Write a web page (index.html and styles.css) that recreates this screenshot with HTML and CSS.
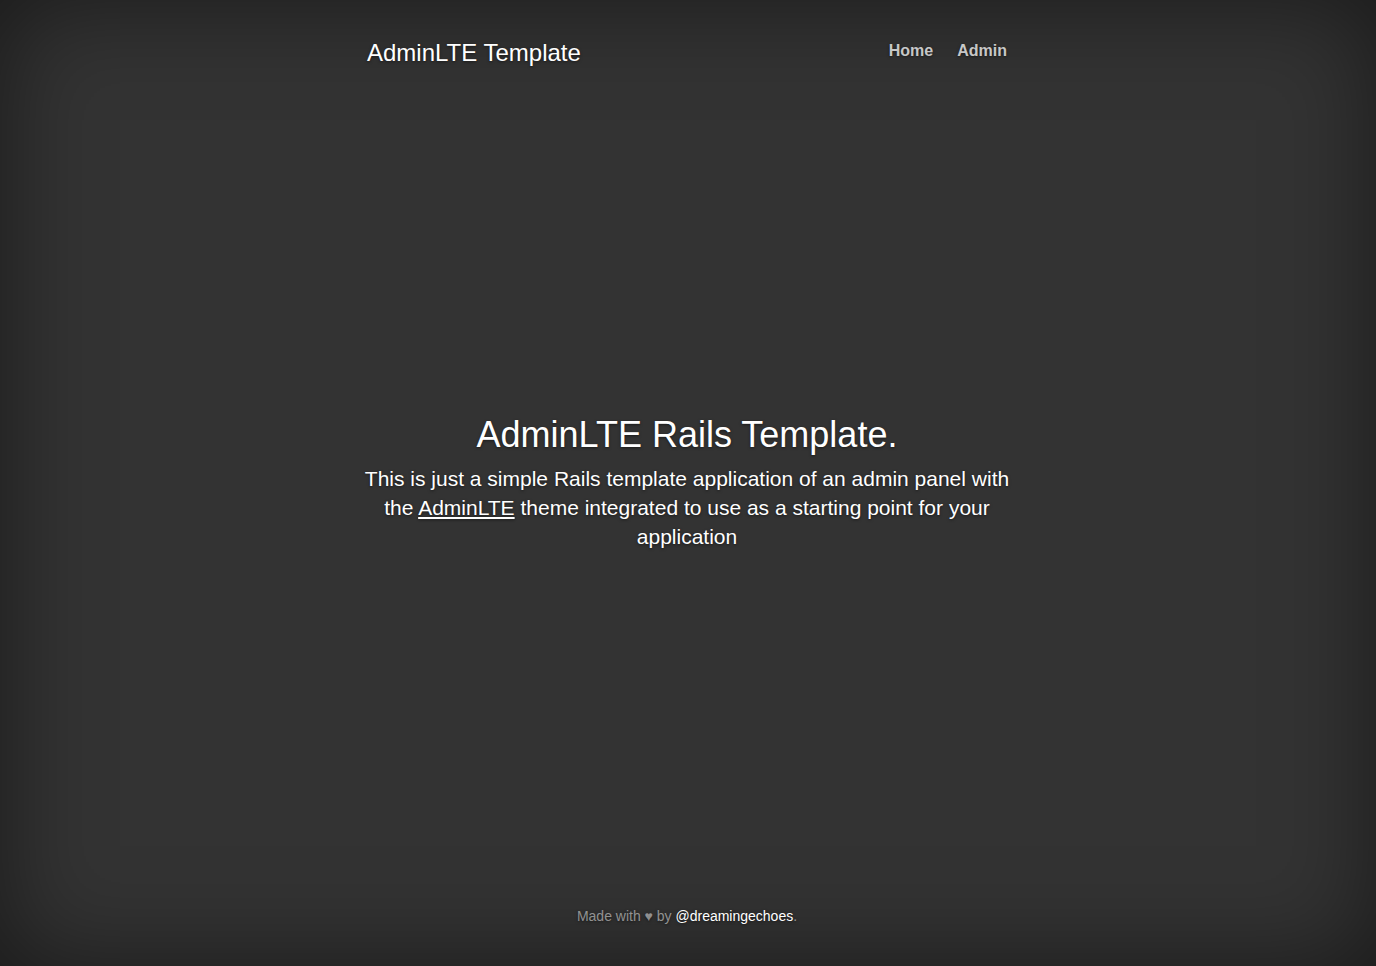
FILE: index.html
```html
<!DOCTYPE html>
<html lang="en">
<head>
<meta charset="utf-8">
<title>AdminLTE Template</title>
<link rel="stylesheet" href="styles.css">
</head>
<body>
<div class="site-wrapper">
  <header class="masthead">
    <h3 class="masthead-brand">AdminLTE Template</h3>
    <nav>
      <ul class="masthead-nav">
        <li><a href="#">Home</a></li>
        <li><a href="#">Admin</a></li>
      </ul>
    </nav>
  </header>
  <main class="cover">
    <h1 class="cover-heading">AdminLTE Rails Template.</h1>
    <p class="lead">This is just a simple Rails template application of an admin panel with the <a class="underlined" href="#">AdminLTE</a> theme integrated to use as a starting point for your application</p>
  </main>
  <footer class="mastfoot">
    <p>Made with ♥ by <a href="#">@dreamingechoes</a>.</p>
  </footer>
</div>
</body>
</html>
```
FILE: styles.css
```css
html, body {
  height: 100%;
  margin: 0;
  background-color: #333;
}
body {
  font-family: "Liberation Sans", Arial, sans-serif;
  font-size: 14px;
  line-height: 1.42857;
  color: #fff;
  text-align: center;
  text-shadow: 0 1px 3px rgba(0,0,0,.5);
}
a { color: #fff; text-decoration: none; }
.site-wrapper {
  height: 100%;
  box-sizing: border-box;
  padding-right: 2px;
  box-shadow: inset 0 0 100px rgba(0,0,0,.5);
  display: grid;
  grid-template-rows: 1fr auto 1fr;
  justify-items: center;
}
.masthead {
  width: 700px;
  box-sizing: border-box;
  padding: 30px;
  display: flex;
  justify-content: space-between;
  align-items: flex-start;
  align-self: start;
}
.masthead-brand {
  margin: 10px 0;
  font-size: 24px;
  font-weight: 500;
  line-height: 1.1;
}
.masthead-nav {
  list-style: none;
  margin: 0;
  padding: 0;
  display: flex;
  gap: 24px;
}
.masthead-nav a {
  display: block;
  padding: 11px 0 9px;
  line-height: 20px;
  font-size: 16px;
  font-weight: bold;
  color: rgba(255,255,255,.75);
  border-bottom: 2px solid transparent;
}
.cover {
  width: 700px;
  box-sizing: border-box;
  padding: 0 20px;
}
.cover-heading {
  margin: 20px 0 10px;
  font-size: 36px;
  font-weight: 500;
  line-height: 1.1;
}
.lead {
  margin: 0 0 20px;
  font-size: 21px;
  font-weight: 300;
  line-height: 29px;
}
.underlined { text-decoration: underline; }
.mastfoot {
  width: 700px;
  box-sizing: border-box;
  padding: 30px;
  align-self: end;
  color: rgba(255,255,255,.5);
}
.mastfoot p { margin: 0 0 9px; }
```
